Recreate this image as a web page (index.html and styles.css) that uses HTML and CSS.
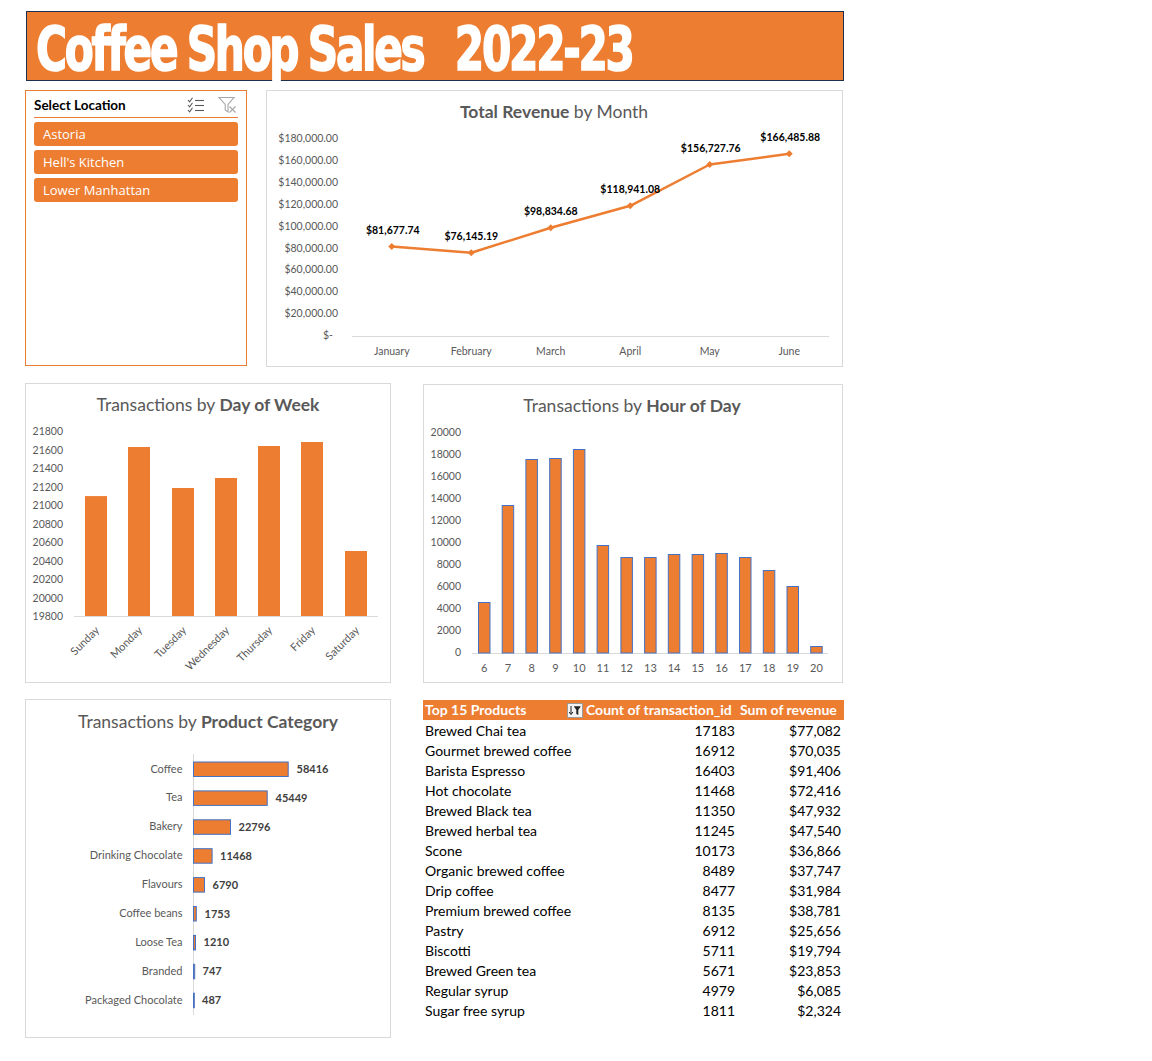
FILE: index.html
```html
<!DOCTYPE html>
<html lang="en">
<head>
<meta charset="utf-8">
<title>Coffee Shop Sales 2022-23</title>
<link rel="stylesheet" href="styles.css">
</head>
<body>
<div class="page">
  <header class="banner">
    <h1 class="title"><span class="title-text">Coffee Shop Sales   2022-23</span></h1>
  </header>

  <div class="row row1">
    <aside class="slicer">
      <div class="slicer-head">
        <span class="slicer-title">Select Location</span>
        <span class="slicer-icons">
          <svg class="ico-multi" width="18" height="16" viewBox="0 0 18 16">
            <polyline points="1,3 2.6,4.8 5.5,0.8" fill="none" stroke="#5a5a5a" stroke-width="1.1"/>
            <line x1="8" y1="3.5" x2="17" y2="3.5" stroke="#5a5a5a" stroke-width="1.1"/>
            <polyline points="1,8 2.6,9.8 5.5,5.8" fill="none" stroke="#5a5a5a" stroke-width="1.1"/>
            <line x1="8" y1="8.5" x2="17" y2="8.5" stroke="#5a5a5a" stroke-width="1.1"/>
            <polyline points="1,13 2.6,14.8 5.5,10.8" fill="none" stroke="#5a5a5a" stroke-width="1.1"/>
            <line x1="8" y1="13.5" x2="17" y2="13.5" stroke="#5a5a5a" stroke-width="1.1"/>
          </svg>
          <svg class="ico-clear" width="19" height="18" viewBox="0 0 19 18">
            <path d="M1 1.5 H16 L10 8.5 V16 L7.2 14 V8.5 Z" fill="none" stroke="#a6a6a6" stroke-width="1.1"/>
            <line x1="11.5" y1="10.5" x2="17.5" y2="16.5" stroke="#a6a6a6" stroke-width="1.1"/>
            <line x1="17.5" y1="10.5" x2="11.5" y2="16.5" stroke="#a6a6a6" stroke-width="1.1"/>
          </svg>
        </span>
      </div>
      <ul class="slicer-list">
        <li class="slicer-item">Astoria</li>
        <li class="slicer-item">Hell's Kitchen</li>
        <li class="slicer-item">Lower Manhattan</li>
      </ul>
    </aside>

    <section class="card card-rev">
      <svg class="chart" width="575" height="275" viewBox="0 0 575 275">
        <text class="ttl" x="287" y="27" text-anchor="middle"><tspan class="b">Total Revenue</tspan> by Month</text>
        <g class="ylab" text-anchor="end">
          <text x="71" y="51">$180,000.00</text>
          <text x="71" y="72.9">$160,000.00</text>
          <text x="71" y="94.8">$140,000.00</text>
          <text x="71" y="116.7">$120,000.00</text>
          <text x="71" y="138.6">$100,000.00</text>
          <text x="71" y="160.5">$80,000.00</text>
          <text x="71" y="182.4">$60,000.00</text>
          <text x="71" y="204.3">$40,000.00</text>
          <text x="71" y="226.2">$20,000.00</text>
          <text x="66" y="248.1">$-</text>
        </g>
        <line class="axis" x1="85" y1="245.5" x2="562" y2="245.5"/>
        <g class="xlab" text-anchor="middle">
          <text x="124.75" y="264">January</text>
          <text x="204.25" y="264">February</text>
          <text x="283.75" y="264">March</text>
          <text x="363.25" y="264">April</text>
          <text x="442.75" y="264">May</text>
          <text x="522.25" y="264">June</text>
        </g>
        <polyline class="rev-line" points="124.75,155.6 204.25,161.7 283.75,136.8 363.25,114.8 442.75,73.5 522.25,62.8"/>
        <g class="marker">
          <polygon points="124.75,152.1 128.25,155.6 124.75,159.1 121.25,155.6"/>
          <polygon points="204.25,158.2 207.75,161.7 204.25,165.2 200.75,161.7"/>
          <polygon points="283.75,133.3 287.25,136.8 283.75,140.3 280.25,136.8"/>
          <polygon points="363.25,111.3 366.75,114.8 363.25,118.3 359.75,114.8"/>
          <polygon points="442.75,70 446.25,73.5 442.75,77 439.25,73.5"/>
          <polygon points="522.25,59.3 525.75,62.8 522.25,66.3 518.75,62.8"/>
        </g>
        <g class="dlab" text-anchor="middle">
          <text x="125.75" y="142.6">$81,677.74</text>
          <text x="204.25" y="148.7">$76,145.19</text>
          <text x="283.75" y="123.8">$98,834.68</text>
          <text x="363.25" y="101.8">$118,941.08</text>
          <text x="443.75" y="60.5">$156,727.76</text>
          <text x="523.25" y="49.8">$166,485.88</text>
        </g>
      </svg>
    </section>
  </div>

  <div class="row row2">
    <section class="card card-dow">
      <svg class="chart" width="364" height="298" viewBox="0 0 364 298">
        <text class="ttl" x="182" y="27" text-anchor="middle">Transactions by <tspan class="b">Day of Week</tspan></text>
        <g class="ylab" text-anchor="end">
          <text x="37" y="51">21800</text>
          <text x="37" y="69.5">21600</text>
          <text x="37" y="88">21400</text>
          <text x="37" y="106.5">21200</text>
          <text x="37" y="125">21000</text>
          <text x="37" y="143.5">20800</text>
          <text x="37" y="162">20600</text>
          <text x="37" y="180.5">20400</text>
          <text x="37" y="199">20200</text>
          <text x="37" y="217.5">20000</text>
          <text x="37" y="236">19800</text>
        </g>
        <g class="bar-plain">
          <rect x="59" y="112.1" width="22" height="119.9"/>
          <rect x="102" y="63" width="22" height="169"/>
          <rect x="146" y="104" width="22" height="128"/>
          <rect x="189" y="94" width="22" height="138"/>
          <rect x="232" y="62" width="22" height="170"/>
          <rect x="275" y="58" width="22" height="174"/>
          <rect x="319" y="167" width="22" height="65"/>
        </g>
        <line class="axis" x1="48" y1="232.5" x2="352" y2="232.5"/>
        <g class="xlab xrot" text-anchor="end">
          <text transform="translate(74,247) rotate(-45)">Sunday</text>
          <text transform="translate(117,247) rotate(-45)">Monday</text>
          <text transform="translate(161,247) rotate(-45)">Tuesday</text>
          <text transform="translate(204,247) rotate(-45)">Wednesday</text>
          <text transform="translate(247,247) rotate(-45)">Thursday</text>
          <text transform="translate(290,247) rotate(-45)">Friday</text>
          <text transform="translate(334,247) rotate(-45)">Saturday</text>
        </g>
      </svg>
    </section>

    <section class="card card-hour">
      <svg class="chart" width="418" height="297" viewBox="0 0 418 297">
        <text class="ttl" x="208" y="27" text-anchor="middle">Transactions by <tspan class="b">Hour of Day</tspan></text>
        <g class="ylab" text-anchor="end">
          <text x="37" y="51">20000</text>
          <text x="37" y="73">18000</text>
          <text x="37" y="95">16000</text>
          <text x="37" y="117">14000</text>
          <text x="37" y="139">12000</text>
          <text x="37" y="161">10000</text>
          <text x="37" y="183">8000</text>
          <text x="37" y="205">6000</text>
          <text x="37" y="227">4000</text>
          <text x="37" y="249">2000</text>
          <text x="37" y="271">0</text>
        </g>
        <line class="axis" x1="48" y1="268.5" x2="404" y2="268.5"/>
        <g class="bar-edge">
          <rect x="54.5" y="217.5" width="11.5" height="50.5"/>
          <rect x="78.2" y="120.5" width="11.5" height="147.5"/>
          <rect x="101.9" y="74.5" width="11.5" height="193.5"/>
          <rect x="125.7" y="73.5" width="11.5" height="194.5"/>
          <rect x="149.4" y="64.5" width="11.5" height="203.5"/>
          <rect x="173.1" y="160.5" width="11.5" height="107.5"/>
          <rect x="196.9" y="172.5" width="11.5" height="95.5"/>
          <rect x="220.6" y="172.5" width="11.5" height="95.5"/>
          <rect x="244.3" y="169.5" width="11.5" height="98.5"/>
          <rect x="268.1" y="169.5" width="11.5" height="98.5"/>
          <rect x="291.8" y="168.5" width="11.5" height="99.5"/>
          <rect x="315.5" y="172.5" width="11.5" height="95.5"/>
          <rect x="339.3" y="185.5" width="11.5" height="82.5"/>
          <rect x="363" y="201.5" width="11.5" height="66.5"/>
          <rect x="386.7" y="261.5" width="11.5" height="6.5"/>
        </g>
        <g class="xlab2" text-anchor="middle">
          <text x="60.3" y="287">6</text>
          <text x="84" y="287">7</text>
          <text x="107.7" y="287">8</text>
          <text x="131.4" y="287">9</text>
          <text x="155.2" y="287">10</text>
          <text x="178.9" y="287">11</text>
          <text x="202.6" y="287">12</text>
          <text x="226.4" y="287">13</text>
          <text x="250.1" y="287">14</text>
          <text x="273.8" y="287">15</text>
          <text x="297.6" y="287">16</text>
          <text x="321.3" y="287">17</text>
          <text x="345" y="287">18</text>
          <text x="368.8" y="287">19</text>
          <text x="392.5" y="287">20</text>
        </g>
      </svg>
    </section>
  </div>

  <div class="row row3">
    <section class="card card-cat">
      <svg class="chart" width="364" height="337" viewBox="0 0 364 337">
        <text class="ttl" x="182" y="28" text-anchor="middle">Transactions by <tspan class="b">Product Category</tspan></text>
        <line class="axis" x1="167.5" y1="54" x2="167.5" y2="315"/>
        <g class="clab" text-anchor="end">
          <text x="156.5" y="72.5">Coffee</text>
          <text x="156.5" y="101.4">Tea</text>
          <text x="156.5" y="130.3">Bakery</text>
          <text x="156.5" y="159.2">Drinking Chocolate</text>
          <text x="156.5" y="188.1">Flavours</text>
          <text x="156.5" y="217">Coffee beans</text>
          <text x="156.5" y="245.9">Loose Tea</text>
          <text x="156.5" y="274.8">Branded</text>
          <text x="156.5" y="303.7">Packaged Chocolate</text>
        </g>
        <g class="bar-edge">
          <rect x="167.5" y="62" width="94.7" height="14.5"/>
          <rect x="167.5" y="90.9" width="73.7" height="14.5"/>
          <rect x="167.5" y="119.8" width="37" height="14.5"/>
          <rect x="167.5" y="148.7" width="18.6" height="14.5"/>
          <rect x="167.5" y="177.6" width="11" height="14.5"/>
          <rect x="167.5" y="206.5" width="2.8" height="14.5"/>
          <rect x="167.5" y="235.4" width="2" height="14.5"/>
          <rect x="167.5" y="264.3" width="1.2" height="14.5"/>
          <rect x="167.5" y="293.2" width="0.8" height="14.5"/>
        </g>
        <g class="vlab">
          <text x="270.5" y="73">58416</text>
          <text x="249.5" y="101.9">45449</text>
          <text x="212.5" y="130.8">22796</text>
          <text x="194" y="159.7">11468</text>
          <text x="186.5" y="188.6">6790</text>
          <text x="178.5" y="217.5">1753</text>
          <text x="177.5" y="246.4">1210</text>
          <text x="176.5" y="275.3">747</text>
          <text x="176" y="304.2">487</text>
        </g>
      </svg>
    </section>

    <section class="top15">
      <div class="trow thead">
        <div class="cell c1 th1"><span>Top 15 Products</span>
          <svg class="fbtn" width="16" height="15" viewBox="0 0 16 15">
            <rect x="0.5" y="0.5" width="15" height="14" fill="#f3f3f3" stroke="#9a9a9a"/>
            <line x1="4" y1="3" x2="4" y2="11" stroke="#222" stroke-width="1"/>
            <polyline points="2.2,9 4,11.6 5.8,9" fill="none" stroke="#222" stroke-width="1"/>
            <polygon points="6.8,3.2 13.8,3.2 11.3,7 11.3,12 9.3,11 9.3,7" fill="#222"/>
          </svg>
        </div>
        <div class="cell c2 th2">Count of transaction_id</div>
        <div class="cell c3 th3">Sum of revenue</div>
      </div>
      <div class="trow"><div class="cell c1">Brewed Chai tea</div><div class="cell c2">17183</div><div class="cell c3">$77,082</div></div>
      <div class="trow"><div class="cell c1">Gourmet brewed coffee</div><div class="cell c2">16912</div><div class="cell c3">$70,035</div></div>
      <div class="trow"><div class="cell c1">Barista Espresso</div><div class="cell c2">16403</div><div class="cell c3">$91,406</div></div>
      <div class="trow"><div class="cell c1">Hot chocolate</div><div class="cell c2">11468</div><div class="cell c3">$72,416</div></div>
      <div class="trow"><div class="cell c1">Brewed Black tea</div><div class="cell c2">11350</div><div class="cell c3">$47,932</div></div>
      <div class="trow"><div class="cell c1">Brewed herbal tea</div><div class="cell c2">11245</div><div class="cell c3">$47,540</div></div>
      <div class="trow"><div class="cell c1">Scone</div><div class="cell c2">10173</div><div class="cell c3">$36,866</div></div>
      <div class="trow"><div class="cell c1">Organic brewed coffee</div><div class="cell c2">8489</div><div class="cell c3">$37,747</div></div>
      <div class="trow"><div class="cell c1">Drip coffee</div><div class="cell c2">8477</div><div class="cell c3">$31,984</div></div>
      <div class="trow"><div class="cell c1">Premium brewed coffee</div><div class="cell c2">8135</div><div class="cell c3">$38,781</div></div>
      <div class="trow"><div class="cell c1">Pastry</div><div class="cell c2">6912</div><div class="cell c3">$25,656</div></div>
      <div class="trow"><div class="cell c1">Biscotti</div><div class="cell c2">5711</div><div class="cell c3">$19,794</div></div>
      <div class="trow"><div class="cell c1">Brewed Green tea</div><div class="cell c2">5671</div><div class="cell c3">$23,853</div></div>
      <div class="trow"><div class="cell c1">Regular syrup</div><div class="cell c2">4979</div><div class="cell c3">$6,085</div></div>
      <div class="trow"><div class="cell c1">Sugar free syrup</div><div class="cell c2">1811</div><div class="cell c3">$2,324</div></div>
    </section>
  </div>
</div>
</body>
</html>
```

FILE: styles.css
```css
* { box-sizing: border-box; }
html, body { margin: 0; padding: 0; background: #ffffff; }
body { font-family: Lato, "Liberation Sans", sans-serif; color: #000; }

.page {
  padding: 11px 0 0 25px;
  width: 870px;
}

/* Banner */
.banner {
  margin-left: 1px;
  width: 818px;
  height: 70px;
  background: #ED7D31;
  border: 1px solid #1f2f4f;
  padding: 6px 0 0 9px;
}
.title {
  margin: 0;
  font-family: "DejaVu Sans Condensed", "DejaVu Sans", sans-serif;
  font-weight: bold;
  font-size: 61px;
  line-height: 61px;
  color: #ffffff;
  white-space: pre;
  letter-spacing: -3px;
  word-spacing: -2.5px;
  width: 560px;
}
.title-text {
  display: inline-block;
  transform-origin: left center;
  transform: scaleX(0.77);
  -webkit-text-stroke: 1.6px #ffffff;
}

/* Rows */
.row { display: flex; align-items: flex-start; }
.row1 { margin-top: 9px; gap: 19px; }
.row2 { margin-top: 16px; gap: 32px; }
.row3 { margin-top: 16px; gap: 32px; }

/* Slicer */
.slicer {
  width: 222px;
  height: 276px;
  border: 1px solid #ED7D31;
  background: #fff;
}
.slicer-head {
  margin: 0 8px;
  height: 27px;
  border-bottom: 1px solid #ED7D31;
  display: flex;
  align-items: center;
  justify-content: space-between;
}
.slicer-title {
  font-family: Lato, sans-serif;
  font-weight: bold;
  font-size: 13.5px;
  color: #000;
  padding-top: 1px;
}
.slicer-icons { display: flex; align-items: center; gap: 13px; padding-right: 1px; padding-top: 1px; }
.slicer-icons svg { display: block; }
.slicer-list {
  list-style: none;
  margin: 4px 8px 0 8px;
  padding: 0;
  display: flex;
  flex-direction: column;
  gap: 4px;
}
.slicer-item {
  height: 24px;
  line-height: 24px;
  background: #ED7D31;
  border-radius: 3px;
  color: #ffffff;
  font-family: "Open Sans", "Noto Sans", sans-serif;
  font-size: 13px;
  padding-left: 9px;
}

/* Chart cards */
.card {
  border: 1px solid #d9d9d9;
  background: #fff;
}
.card svg { display: block; }
.card-rev { width: 577px; height: 277px; }
.card-dow { width: 366px; height: 300px; }
.card-hour { width: 420px; height: 299px; margin-top: 1px; }
.card-cat { width: 366px; height: 339px; }

.chart { font-family: Lato, "Liberation Sans", sans-serif; }
.chart .ttl { font-size: 17.5px; fill: #595959; }
.chart .ttl .b { font-weight: bold; }
.chart .ylab { font-size: 10.5px; fill: #595959; }
.chart .xlab { font-size: 10.5px; fill: #595959; }
.chart .xrot { font-size: 11px; }
.chart .xlab2 { font-size: 11px; fill: #595959; }
.chart .clab { font-size: 11px; fill: #595959; }
.chart .vlab { font-size: 11px; font-weight: bold; fill: #404040; }
.chart .dlab { font-size: 10.5px; font-weight: bold; fill: #000; }
.chart .axis { stroke: #d9d9d9; stroke-width: 1; }
.chart .rev-line { fill: none; stroke: #ED7D31; stroke-width: 2.5; stroke-linejoin: round; stroke-linecap: round; }
.chart .marker polygon { fill: #ED7D31; }
.chart .bar-plain rect { fill: #ED7D31; }
.chart .bar-edge rect { fill: #ED7D31; stroke: #4472C4; stroke-width: 1; }

/* Top 15 table */
.top15 {
  width: 420px;
  margin-top: 1px;
  font-family: Lato, "Liberation Sans", sans-serif;
  font-size: 14px;
}
.trow {
  display: grid;
  grid-template-columns: 161px 152px 107px;
  height: 20px;
  line-height: 20px;
}
.trow + .trow { line-height: 21px; }
.cell { white-space: nowrap; overflow: hidden; }
.c1 { padding-left: 2px; }
.c2 { text-align: right; padding-right: 1px; }
.c3 { text-align: right; padding-right: 2px; }
.thead {
  background: #ED7D31;
  color: #ffffff;
  font-weight: bold;
  width: 421px;
  grid-template-columns: 161px 152px 108px;
}
.th1 { display: flex; align-items: center; justify-content: space-between; padding-right: 1px; }
.th1 .fbtn { display: block; }
.th2 { text-align: left; padding-left: 2px; }
.th3 { text-align: left; padding-left: 4px; }
```
